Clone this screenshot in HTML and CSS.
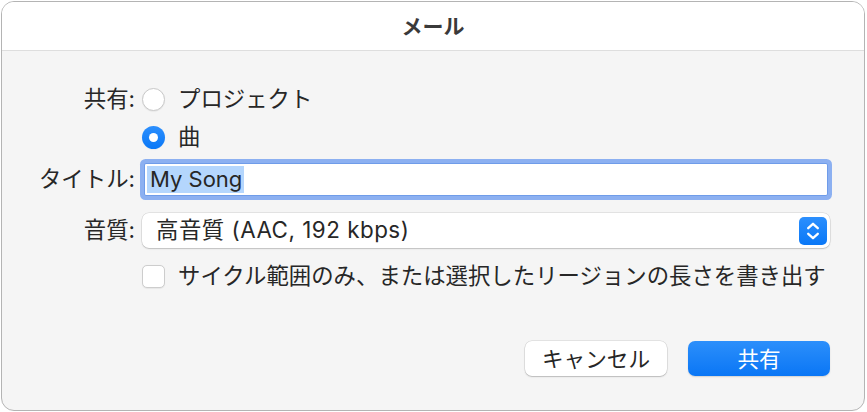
FILE: index.html
```html
<!DOCTYPE html>
<html lang="ja">
<head>
<meta charset="utf-8">
<title>メール</title>
<link rel="stylesheet" href="styles.css">
</head>
<body>
<div class="window">
  <div class="titlebar">メール</div>
  <div class="content">
    <div class="row row-radio1">
      <div class="label">共有:</div>
      <div class="control">
        <span class="radio"></span><span class="text">プロジェクト</span>
      </div>
    </div>
    <div class="row row-radio2">
      <div class="label"></div>
      <div class="control">
        <span class="radio checked"></span><span class="text">曲</span>
      </div>
    </div>
    <div class="row row-field">
      <div class="label">タイトル:</div>
      <div class="control">
        <div class="field"><span class="sel">My Song</span></div>
      </div>
    </div>
    <div class="row row-popup">
      <div class="label">音質:</div>
      <div class="control">
        <div class="popup">
          <span class="popup-text">高音質 (AAC, 192 kbps)</span>
          <span class="stepper">
            <svg width="28" height="28" viewBox="0 0 28 28"><path d="M9.2 11.2 L14 6.8 L18.8 11.2 M9.2 16.8 L14 21.2 L18.8 16.8" fill="none" stroke="#fff" stroke-width="2.3" stroke-linecap="round" stroke-linejoin="round"/></svg>
          </span>
        </div>
      </div>
    </div>
    <div class="row row-check">
      <div class="label"></div>
      <div class="control">
        <span class="checkbox"></span><span class="text">サイクル範囲のみ、または選択したリージョンの長さを書き出す</span>
      </div>
    </div>
    <div class="buttons">
      <button class="btn cancel">キャンセル</button>
      <button class="btn primary">共有</button>
    </div>
  </div>
</div>
</body>
</html>
```

FILE: styles.css
```css
* { box-sizing: border-box; }
html, body { margin: 0; padding: 0; background: #ffffff; }
body {
  font-family: "Inter", "Noto Sans CJK JP", sans-serif;
  color: #272727;
}
.window {
  margin: 1px;
  width: 864px;
  height: 410px;
  border: 1px solid #b4b4b4;
  border-radius: 13px;
  background: #f5f5f5;
  overflow: hidden;
}
.titlebar {
  height: 49px;
  background: #ffffff;
  border-bottom: 1px solid #dedede;
  display: flex;
  align-items: center;
  justify-content: center;
  font-family: "Noto Sans CJK JP", sans-serif;
  font-weight: 700;
  font-size: 21px;
  color: #3a3a3a;
  padding-bottom: 2px;
}
.content {
  padding: 36px 34px 0 0;
}
.row {
  display: grid;
  grid-template-columns: 133px 1fr;
  column-gap: 7px;
  align-items: center;
  font-size: 22.4px;
}
.label {
  text-align: right;
  white-space: nowrap;
  line-height: 1;
}
.control {
  display: flex;
  align-items: center;
  line-height: 1;
}
.row-radio1 { height: 24px; }
.row-radio2 { height: 24px; margin-top: 14px; }
.row-field { height: 33px; margin-top: 14px; }
.row-popup { height: 35px; margin-top: 17px; }
.row-check { height: 24px; margin-top: 16px; }

.radio {
  width: 23px;
  height: 23px;
  border-radius: 50%;
  background: #ffffff;
  border: 1px solid #c9c9c9;
  box-shadow: 0 0.5px 1px rgba(0,0,0,0.08);
  flex: none;
  margin-right: 13px;
  position: relative;
}
.radio.checked {
  border: none;
  background: linear-gradient(#2c8ffd, #0a78f7);
}
.radio.checked::after {
  content: "";
  position: absolute;
  left: 7px;
  top: 7px;
  width: 9px;
  height: 9px;
  border-radius: 50%;
  background: #ffffff;
}
.text { white-space: nowrap; }

.field {
  margin: 0 2px;
  flex: 1;
  height: 33px;
  background: #ffffff;
  border: 1px solid #6f9ce9;
  border-radius: 2px;
  box-shadow: 0 0 0 4px #8cb0f1;
  display: flex;
  align-items: center;
  padding-left: 2px;
  font-size: 22px;
}
.sel {
  background: #b4d6fd;
  padding: 3px 2px 3px 3px;
  line-height: 21px;
  color: #262626;
}

.popup {
  flex: 1;
  height: 35px;
  background: #ffffff;
  border-radius: 7px;
  box-shadow: 0 0 0 0.5px rgba(0,0,0,0.14), 0 1px 1.5px rgba(0,0,0,0.16);
  display: flex;
  align-items: center;
  justify-content: space-between;
  padding: 0 3px 0 14px;
}
.popup-text { white-space: nowrap; letter-spacing: 0.5px; }
.stepper {
  width: 28px;
  height: 28px;
  border-radius: 5px;
  background: linear-gradient(#2c8ffd, #0a78f7);
  display: flex;
}

.checkbox {
  width: 23px;
  height: 23px;
  border-radius: 5px;
  background: #ffffff;
  border: 1px solid #cdcdcd;
  box-shadow: 0 0.5px 1px rgba(0,0,0,0.06);
  flex: none;
  margin-right: 13px;
}

.buttons {
  margin-top: 53px;
  display: flex;
  justify-content: flex-end;
  gap: 21px;
}
.btn {
  width: 142px;
  height: 35px;
  border: none;
  border-radius: 7px;
  font-family: "Noto Sans CJK JP", sans-serif;
  font-size: 21.6px;
  line-height: 1;
  padding: 0;
  padding-bottom: 1px;
}
.cancel {
  background: #ffffff;
  color: #262626;
  box-shadow: 0 0 0 0.5px rgba(0,0,0,0.14), 0 1px 1.5px rgba(0,0,0,0.18);
}
.primary {
  background: linear-gradient(#2c8ffb, #0a76f5);
  color: #ffffff;
  box-shadow: 0 1px 1.5px rgba(0,0,0,0.15);
}
```
